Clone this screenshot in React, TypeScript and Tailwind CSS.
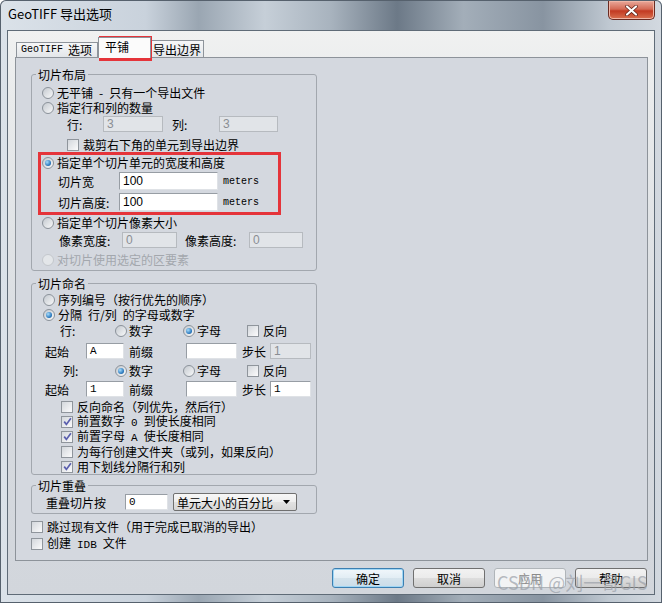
import React from 'react';

type RadioProps = {
  checked?: boolean;
  disabled?: boolean;
  gap?: string;
  children: React.ReactNode;
};

const Radio: React.FC<RadioProps> = ({ checked = false, disabled = false, gap = 'gap-[3px]', children }) => (
  <div className={`flex items-center ${gap} ${disabled ? 'text-[#a3a7ad]' : 'text-black'}`}>
    <span
      className={`flex h-[12px] w-[12px] shrink-0 items-center justify-center rounded-full border ${
        disabled
          ? 'border-[#c3c7cc] bg-[#e3e6e9]'
          : 'border-[#8b929a] bg-[linear-gradient(135deg,#c4c9cf,#f8f9fa)]'
      }`}
    >
      {checked && (
        <span className="h-[6px] w-[6px] rounded-full bg-[radial-gradient(circle_at_35%_35%,#a6dcfb,#2a78bd_65%,#1b4f86)]" />
      )}
    </span>
    <span className="whitespace-pre">{children}</span>
  </div>
);

const Check: React.FC<{ checked?: boolean; children: React.ReactNode }> = ({ checked = false, children }) => (
  <div className="flex items-center gap-[4px]">
    <span className="flex h-[12px] w-[12px] shrink-0 items-center justify-center border border-[#8f959c] bg-[linear-gradient(135deg,#d3d7dc,#fbfbfc)]">
      {checked && (
        <svg width="9" height="9" viewBox="0 0 9 9">
          <path d="M1.2 4.6 L3.4 7.4 L7.9 1.2" fill="none" stroke="#5a5fae" strokeWidth="1.7" />
        </svg>
      )}
    </span>
    <span className="whitespace-pre">{children}</span>
  </div>
);

type FieldProps = {
  value?: string;
  w: string;
  h?: string;
  disabled?: boolean;
  mono?: boolean;
};

const Field: React.FC<FieldProps> = ({ value = '', w, h = 'h-[16px]', disabled = false, mono = false }) => (
  <div
    className={`${w} ${h} flex shrink-0 items-center border px-[3px] ${
      mono ? "font-['Liberation_Mono',monospace] text-[11px]" : "font-['Liberation_Sans',sans-serif] text-[12px]"
    } ${
      disabled
        ? 'border-[#b6babf] bg-[#e1e4e8] text-[#8a8e93]'
        : 'border-[#979da4] border-r-[#dfe2e6] border-b-[#dfe2e6] bg-white text-black'
    }`}
  >
    {value}
  </div>
);

const Group: React.FC<{ title: string; className?: string; children: React.ReactNode }> = ({
  title,
  className = '',
  children,
}) => (
  <fieldset className={`w-[286px] rounded-[3px] border border-[#a2a7ae] ${className}`}>
    <legend className="ml-[4px] px-[2px] leading-[15px]">{title}</legend>
    {children}
  </fieldset>
);

const Btn: React.FC<{ label: string; primary?: boolean; disabled?: boolean }> = ({ label, primary, disabled }) => (
  <div
    className={`flex h-[20px] w-[72px] items-center justify-center rounded-[3px] border ${
      primary
        ? 'border-[#3c7fb1] bg-[linear-gradient(#f1f7fb,#e2edf4_50%,#d5e3ec_50%,#cbdde9)] shadow-[inset_0_0_0_1px_#9fd6f5]'
        : disabled
        ? 'border-[#b0b5b9] bg-[#f2f3f4] text-[#8a8a8a]'
        : 'border-[#707070] bg-[linear-gradient(#f2f2f2,#ebebeb_50%,#dddddd_50%,#cfcfcf)]'
    }`}
  >
    {label}
  </div>
);

const Mono: React.FC<{ children: React.ReactNode }> = ({ children }) => (
  <span className="font-['Liberation_Mono',monospace] text-[11px]">{children}</span>
);

const App: React.FC = () => {
  return (
    <div className="relative flex h-[603px] w-[662px] flex-col overflow-hidden rounded-t-[6px] bg-[linear-gradient(90deg,#dbe2e9_0%,#c9d2dc_22%,#9aa6b2_30%,#c6cfd8_40%,#a8b3be_50%,#6c7987_60%,#a3aeb9_70%,#8894a1_82%,#bfc8d1_92%,#d3d9e0_100%)] px-[7px] pb-[8px] font-['Noto_Sans_CJK_SC','Noto_Sans',sans-serif] text-[12px] leading-[15px] text-black shadow-[inset_0_0_0_1px_#56616d]">
      {/* 标题栏 */}
      <div className="-mx-[7px] flex h-[30px] shrink-0 items-start justify-between pl-[8px] pr-[7px]">
        <span className="pt-[6px] text-[13px] leading-[16px]">GeoTIFF 导出选项</span>
        <div className="mt-[1px] flex h-[19px] w-[47px] items-center justify-center rounded-b-[5px] border border-t-0 border-[#6a2b22] bg-[linear-gradient(#e9a89a,#d46a55_45%,#c23a22_55%,#d9704f)] shadow-[inset_0_0_0_1px_#f0b6a6]">
          <svg width="13" height="11" viewBox="0 0 13 11">
            <path d="M2 1.5 L11 9.5 M11 1.5 L2 9.5" stroke="#5a1f16" strokeWidth="3.6" strokeLinecap="round" />
            <path d="M2 1.5 L11 9.5 M11 1.5 L2 9.5" stroke="#ffffff" strokeWidth="2.2" strokeLinecap="round" />
          </svg>
        </div>
      </div>

      {/* 客户区 */}
      <div className="flex h-[565px] flex-col border border-[#5f6b77] bg-[linear-gradient(#f0f1f1_0%,#e9ebec_12%,#d7dbe0_60%,#d2d6dc_100%)]">
        {/* 选项卡 */}
        <div className="flex h-[26px] shrink-0 items-end pl-[8px]">
          <div className="flex h-[15px] w-[82px] items-center whitespace-nowrap border border-b-0 border-[#8e949b] bg-[linear-gradient(#f6f7f8,#e3e6e9)] pl-[4px] leading-[14px]">
            <span className="font-['Liberation_Mono',monospace] text-[10px]">GeoTIFF</span>
            <span className="ml-[5px] shrink-0">选项</span>
          </div>
          <div className="relative z-10 -mb-[1px] h-[21px] w-[53px] border border-b-0 border-[#8e949b] bg-[#fbfbfb] pl-[6px] pt-[1px]">
            平铺
          </div>
          <div className="flex h-[17px] w-[53px] items-center border border-b-0 border-l-0 border-[#8e949b] bg-[linear-gradient(#f6f7f8,#e3e6e9)] pl-[2px]">
            导出边界
          </div>
        </div>

        {/* 选项卡页 */}
        <div className="ml-[7px] flex h-[504px] w-[633px] shrink-0 flex-col border border-[#8d939a] bg-[#d4d8df] pl-[15px] pt-[9px]">
          <Group title="切片布局">
            <div className="mt-[3px] flex h-[15px] items-center pl-[10px]">
              <Radio>{'无平铺\u2002-\u2002只有一个导出文件'}</Radio>
            </div>
            <div className="flex h-[15px] items-center pl-[10px]">
              <Radio>指定行和列的数量</Radio>
            </div>
            <div className="mt-[1px] flex h-[16px] items-center pl-[35px]">
              <span className="w-[36px] shrink-0">行:</span>
              <Field w="w-[60px]" value="3" disabled />
              <span className="w-[56px] shrink-0 pl-[9px]">列:</span>
              <Field w="w-[59px]" value="3" disabled />
            </div>
            <div className="mt-[5px] flex h-[15px] items-center pl-[35px]">
              <Check>裁剪右下角的单元到导出边界</Check>
            </div>
            <div className="mt-[3px] flex h-[15px] items-center pl-[10px]">
              <Radio checked>指定单个切片单元的宽度和高度</Radio>
            </div>
            <div className="mt-[2px] flex h-[18px] items-center pl-[26px]">
              <span className="w-[61px] shrink-0">切片宽</span>
              <Field w="w-[99px]" h="h-[18px]" value="100" />
              <span className="ml-[5px] font-['Liberation_Mono',monospace] text-[10px]">meters</span>
            </div>
            <div className="mt-[3px] flex h-[18px] items-center pl-[26px]">
              <span className="w-[61px] shrink-0">切片高度:</span>
              <Field w="w-[99px]" h="h-[18px]" value="100" />
              <span className="ml-[5px] font-['Liberation_Mono',monospace] text-[10px]">meters</span>
            </div>
            <div className="mt-[4px] flex h-[15px] items-center pl-[10px]">
              <Radio>指定单个切片像素大小</Radio>
            </div>
            <div className="mt-[2px] flex h-[16px] items-center pl-[27px]">
              <span className="w-[63px] shrink-0">像素宽度:</span>
              <Field w="w-[55px]" value="0" disabled />
              <span className="w-[72px] shrink-0 pl-[8px]">像素高度:</span>
              <Field w="w-[54px]" value="0" disabled />
            </div>
            <div className="mb-[3px] mt-[4px] flex h-[15px] items-center pl-[10px]">
              <Radio disabled>对切片使用选定的区要素</Radio>
            </div>
          </Group>

          <Group title="切片命名" className="mt-[5px]">
            <div className="mt-[1px] flex h-[15px] items-center pl-[11px]">
              <Radio>序列编号（按行优先的顺序）</Radio>
            </div>
            <div className="flex h-[15px] items-center pl-[11px]">
              <Radio checked>{'分隔\u2002行/列\u2002的字母或数字'}</Radio>
            </div>
            <div className="mt-[1px] flex h-[15px] items-center pl-[28px]">
              <span className="w-[55px] shrink-0">行:</span>
              <div className="w-[68px] shrink-0">
                <Radio gap="gap-[2px]">数字</Radio>
              </div>
              <div className="w-[64px] shrink-0">
                <Radio gap="gap-[2px]" checked>
                  字母
                </Radio>
              </div>
              <Check>反向</Check>
            </div>
            <div className="mt-[5px] flex h-[16px] items-center pl-[13px]">
              <span className="w-[41px] shrink-0">起始</span>
              <Field w="w-[38px]" value="A" mono />
              <span className="w-[62px] shrink-0 pl-[5px]">前缀</span>
              <Field w="w-[51px]" />
              <span className="w-[33px] shrink-0 pl-[5px]">步长</span>
              <Field w="w-[41px]" value="1" disabled />
            </div>
            <div className="mt-[4px] flex h-[15px] items-center pl-[31px]">
              <span className="w-[52px] shrink-0">列:</span>
              <div className="w-[68px] shrink-0">
                <Radio gap="gap-[2px]" checked>
                  数字
                </Radio>
              </div>
              <div className="w-[64px] shrink-0">
                <Radio gap="gap-[2px]">字母</Radio>
              </div>
              <Check>反向</Check>
            </div>
            <div className="mt-[3px] flex h-[16px] items-center pl-[13px]">
              <span className="w-[41px] shrink-0">起始</span>
              <Field w="w-[38px]" value="1" mono />
              <span className="w-[62px] shrink-0 pl-[5px]">前缀</span>
              <Field w="w-[51px]" />
              <span className="w-[33px] shrink-0 pl-[5px]">步长</span>
              <Field w="w-[41px]" value="1" mono />
            </div>
            <div className="mt-[2px] flex flex-col pl-[29px]">
              <div className="flex h-[15px] items-center">
                <Check>反向命名（列优先，然后行）</Check>
              </div>
              <div className="flex h-[15px] items-center">
                <Check checked>
                  {'前置数字\u2002'}
                  <Mono>0</Mono>
                  {'\u2002到使长度相同'}
                </Check>
              </div>
              <div className="flex h-[15px] items-center">
                <Check checked>
                  {'前置字母\u2002'}
                  <Mono>A</Mono>
                  {'\u2002使长度相同'}
                </Check>
              </div>
              <div className="flex h-[15px] items-center">
                <Check>为每行创建文件夹（或列，如果反向）</Check>
              </div>
              <div className="flex h-[15px] items-center">
                <Check checked>用下划线分隔行和列</Check>
              </div>
            </div>
          </Group>

          <Group title="切片重叠" className="mt-[3px]">
            <div className="mb-[2px] flex h-[18px] items-center pl-[14px]">
              <span className="w-[79px] shrink-0">重叠切片按</span>
              <Field w="w-[43px]" value="0" mono />
              <div className="ml-[5px] flex h-[18px] w-[124px] items-center justify-between rounded-[2px] border border-[#707070] bg-[linear-gradient(#f7f7f7,#eeeeee_50%,#e2e2e2_50%,#d6d6d6)] pl-[3px] pr-[6px]">
                <span>单元大小的百分比</span>
                <svg width="7" height="4" viewBox="0 0 7 4">
                  <path d="M0 0 H7 L3.5 4 Z" fill="#000" />
                </svg>
              </div>
            </div>
          </Group>

          <div className="mt-[5px] flex h-[15px] items-center">
            <Check>跳过现有文件（用于完成已取消的导出）</Check>
          </div>
          <div className="mt-[2px] flex h-[15px] items-center">
            <Check>
              {'创建\u2002'}
              <Mono>IDB</Mono>
              {'\u2002文件'}
            </Check>
          </div>
        </div>

        {/* 按钮 */}
        <div className="flex flex-1 items-start justify-end gap-[9px] pr-[7px] pt-[7px]">
          <Btn label="确定" primary />
          <Btn label="取消" />
          <Btn label="应用" disabled />
          <Btn label="帮助" />
        </div>
      </div>

      {/* 标注红框 */}
      <div className="absolute left-[99px] top-[36px] h-[25px] w-[53px] border-[3px] border-[#e5343a]" />
      <div className="absolute left-[38px] top-[152px] h-[63px] w-[243px] border-[3px] border-[#e5343a]" />

      {/* 水印 */}
      <span className="pointer-events-none absolute left-[497px] top-[571px] whitespace-nowrap text-[18px] leading-[22px] text-[#9aa0a8]/70">
        CSDN @刘一哥GIS
      </span>
    </div>
  );
};

export default App;
